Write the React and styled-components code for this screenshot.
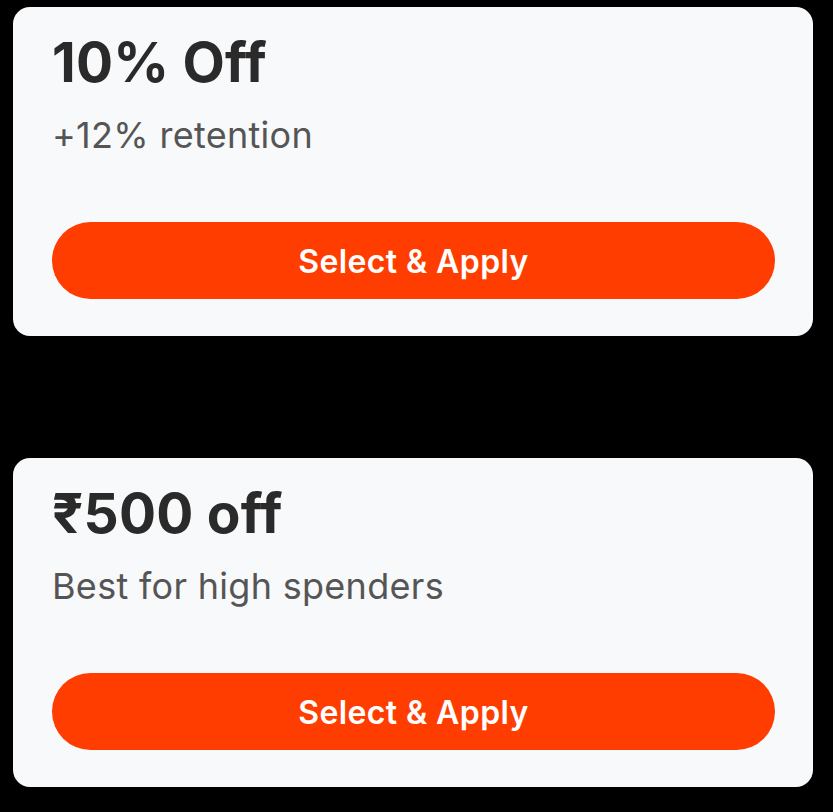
import styled, { createGlobalStyle } from "styled-components";

const GlobalStyle = createGlobalStyle`
  html, body {
    margin: 0;
    padding: 0;
    background: #000;
  }
  body {
    font-family: Inter, "Noto Sans", "Liberation Sans", sans-serif;
  }
`;

const Page = styled.div`
  display: flex;
  flex-direction: column;
  gap: 122px;
  padding: 7px 20px 25px 13px;
  background: #000;
  min-height: 812px;
  box-sizing: border-box;
`;

const Card = styled.div`
  background: #f8f9fb;
  border-radius: 17px;
  padding: 23px 38px 37px 39px;
  display: flex;
  flex-direction: column;
`;

const Title = styled.h2`
  margin: 0;
  font-size: 55px;
  line-height: 64px;
  font-weight: 700;
  color: #2a2a2a;
  letter-spacing: 0.2px;
`;

const Note = styled.p`
  margin: 21px 0 0;
  font-size: 36px;
  line-height: 40px;
  font-weight: 400;
  color: #555555;
  letter-spacing: 0.3px;
`;

const ApplyButton = styled.button`
  margin-top: 67px;
  height: 77px;
  padding-top: 3px;
  border: none;
  border-radius: 39px;
  background: #ff3d00;
  color: #fff;
  font-family: inherit;
  font-size: 32px;
  font-weight: 600;
  letter-spacing: 0.4px;
  cursor: pointer;
`;

const offers = [
  { title: "10% Off", note: "+12% retention" },
  { title: "₹500 off", note: "Best for high spenders" },
];

function App() {
  return (
    <>
      <GlobalStyle />
      <Page>
        {offers.map((o) => (
          <Card key={o.title}>
            <Title>{o.title}</Title>
            <Note>{o.note}</Note>
            <ApplyButton>Select &amp; Apply</ApplyButton>
          </Card>
        ))}
      </Page>
    </>
  );
}

export default App;
